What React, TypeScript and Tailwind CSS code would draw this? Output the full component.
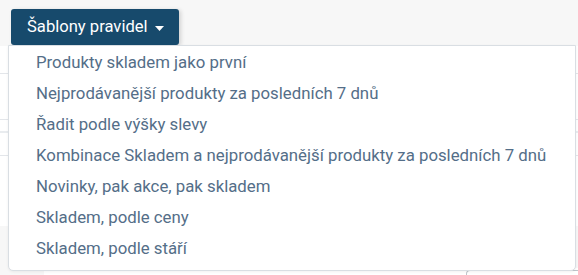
import React from 'react';

const templates = [
  'Produkty skladem jako první',
  'Nejprodávanější produkty za posledních 7 dnů',
  'Řadit podle výšky slevy',
  'Kombinace Skladem a nejprodávanější produkty za posledních 7 dnů',
  'Novinky, pak akce, pak skladem',
  'Skladem, podle ceny',
  'Skladem, podle stáří',
];

export default function App() {
  return (
    <div
      className="relative w-[578px] h-[275px] overflow-hidden bg-[#f7f7f7]"
      style={{ fontFamily: 'Roboto, "Liberation Sans", sans-serif' }}
    >
      {/* Toolbar */}
      <div className="h-[46px] pl-[11px] pt-[9px]">
        <button className="flex items-center gap-[7px] h-[36px] pl-[16px] pr-[15px] rounded-[3px] bg-[#174a6c] text-white text-[16.6px] shadow-[2px_1px_4px_rgba(0,0,0,0.15)]">
          Šablony pravidel
          <svg width="9" height="5" viewBox="0 0 9 5" className="mt-[2px]">
            <path d="M0 0h9L4.5 5z" fill="#fff" />
          </svg>
        </button>
      </div>

      {/* Page content behind the menu */}
      <div className="flex flex-col">
        <div className="h-[180px] bg-white flex flex-col">
          <div className="h-[27px]" />
          <div className="h-[46px] border-t border-[#e3e6ea]" />
          <div className="h-[12px] border-t border-[#e3e6ea]" />
          <div className="h-[24px] border-t-2 border-[#e9ecef]" />
          <div className="flex-1 border-t border-[#e3e6ea]" />
        </div>
        <div className="h-[42px]" />
        <div className="flex-1 ml-[44px] h-[10px] bg-white flex justify-end">
          <div className="w-[112px] h-[10px] mt-[2px] border-t border-l border-[#bfc5cb] rounded-tl-[4px]" />
        </div>
      </div>

      {/* Dropdown menu */}
      <div className="absolute left-[8px] top-[45px] w-[568px] bg-white border border-[#d9dee3] rounded-b-[5px] pt-[1px] pb-[6px] shadow-[0_1px_3px_rgba(0,0,0,0.06)]">
        {templates.map((t) => (
          <div key={t} className="h-[31px] flex items-center pl-[27px] text-[16.8px] text-[#546e88] whitespace-nowrap">
            {t}
          </div>
        ))}
      </div>
    </div>
  );
}
